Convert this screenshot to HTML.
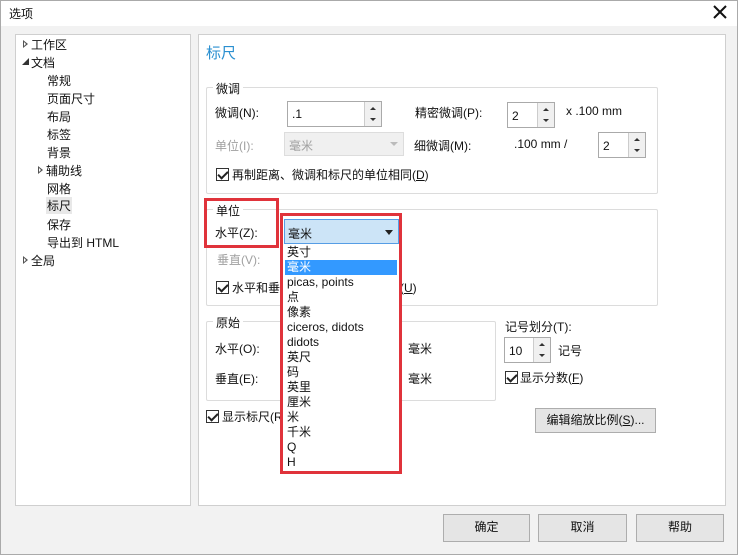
<!DOCTYPE html>
<html><head><meta charset="utf-8"><style>
*{margin:0;padding:0;box-sizing:border-box}
body{width:738px;height:555px;background:#f2f2f2;font-family:"Liberation Sans","Noto Sans CJK SC",sans-serif;font-size:12px;color:#111;position:relative;overflow:hidden}
.a{position:absolute;white-space:nowrap}
.box{position:absolute;border:1px solid #cfcfcf}
.grp{position:absolute;border:1px solid #dcdcdc;border-radius:2px}
.lg{position:absolute;background:#fff;padding:0 3px}
.inp{position:absolute;background:#fff;border:1px solid #aaa}
.sp{position:absolute;background:#f0f0f0;border-left:1px solid #ccc;top:0;right:0;width:17px;height:100%}
.sp:before{content:"";position:absolute;left:5px;top:5px;border:3px solid transparent;border-bottom:3px solid #333;border-top:0}
.sp:after{content:"";position:absolute;left:5px;bottom:5px;border:3px solid transparent;border-top:3px solid #333;border-bottom:0}
.cb{position:absolute;width:13px;height:13px;border:1px solid #333;background:#fff}
.cb:after{content:"";position:absolute;left:3px;top:0px;width:4px;height:8px;border:solid #222;border-width:0 2px 2px 0;transform:rotate(45deg)}
.btn{position:absolute;background:#e5e5e5;border:1px solid #adadad;text-align:center;line-height:25px}
.red{position:absolute;border:3px solid #e0333b}
.gray{color:#a0a0a0}
.li{position:absolute;left:285px;width:112px;height:15px;line-height:15px;padding-left:2px}
.tr{position:absolute;width:0;height:0;border-top:4px solid transparent;border-bottom:4px solid transparent;border-left:5px solid #555}
.tr:after{content:"";position:absolute;left:-4px;top:-2px;border-top:2px solid transparent;border-bottom:2px solid transparent;border-left:2px solid #fff}
</style></head><body>
<div class="a" style="left:0;top:0;width:738px;height:26px;background:#fff"></div>
<div class="a" style="left:9px;top:5px;font-size:12px">选项</div>
<svg class="a" style="left:713px;top:5px" width="14" height="14"><path d="M1 1L13 13M13 1L1 13" stroke="#111" stroke-width="2"/></svg>

<div class="box" style="left:15px;top:34px;width:176px;height:472px;background:#fff"></div>
<div class="tr" style="left:23px;top:40px"></div><div class="a" style="left:31px;top:36px">工作区</div>
<svg class="a" style="left:22px;top:58px" width="7" height="7"><path d="M7 0L7 7L0 7Z" fill="#333"/></svg><div class="a" style="left:31px;top:54px">文档</div>
<div class="a" style="left:47px;top:72px">常规</div>
<div class="a" style="left:47px;top:90px">页面尺寸</div>
<div class="a" style="left:47px;top:108px">布局</div>
<div class="a" style="left:47px;top:126px">标签</div>
<div class="a" style="left:47px;top:144px">背景</div>
<div class="tr" style="left:38px;top:166px"></div><div class="a" style="left:46px;top:162px">辅助线</div>
<div class="a" style="left:47px;top:180px">网格</div>
<div class="a" style="left:46px;top:197px;background:#e8e8e8;padding:0 1px">标尺</div>
<div class="a" style="left:47px;top:216px">保存</div>
<div class="a" style="left:47px;top:234px">导出到 HTML</div>
<div class="tr" style="left:23px;top:256px"></div><div class="a" style="left:31px;top:252px">全局</div>

<div class="box" style="left:198px;top:34px;width:528px;height:472px;background:#fff"></div>
<div class="a" style="left:206px;top:42px;font-size:15px;color:#2a8fd0">标尺</div>

<div class="grp" style="left:206px;top:87px;width:452px;height:107px"></div>
<div class="lg" style="left:213px;top:80px">微调</div>
<div class="a" style="left:215px;top:104px">微调(N):</div>
<div class="inp" style="left:287px;top:101px;width:95px;height:26px"><span class="a" style="left:4px;top:5px">.1</span><div class="sp"></div></div>
<div class="a" style="left:415px;top:104px">精密微调(P):</div>
<div class="inp" style="left:507px;top:102px;width:48px;height:26px"><span class="a" style="left:4px;top:6px">2</span><div class="sp"></div></div>
<div class="a" style="left:566px;top:104px">x .100 mm</div>
<div class="a gray" style="left:215px;top:137px">单位(I):</div>
<div class="a" style="left:284px;top:132px;width:120px;height:24px;background:#f0f0f0;border:1px solid #ddd"><span class="a gray" style="left:4px;top:4px">毫米</span><span class="a" style="right:5px;top:9px;border:4px solid transparent;border-top:4px solid #bbb"></span></div>
<div class="a" style="left:414px;top:137px">细微调(M):</div>
<div class="a" style="left:514px;top:137px">.100 mm /</div>
<div class="inp" style="left:598px;top:132px;width:48px;height:26px"><span class="a" style="left:4px;top:6px">2</span><div class="sp"></div></div>
<div class="cb" style="left:216px;top:168px"></div>
<div class="a" style="left:232px;top:166px">再制距离、微调和标尺的单位相同(<u>D</u>)</div>

<div class="grp" style="left:206px;top:209px;width:452px;height:97px"></div>
<div class="lg" style="left:213px;top:202px">单位</div>
<div class="a" style="left:215px;top:224px">水平(Z):</div>
<div class="a gray" style="left:217px;top:251px">垂直(V):</div>
<div class="cb" style="left:216px;top:281px"></div>
<div class="a" style="left:232px;top:279px">水平和垂直标尺使用相同的单位(<u>U</u>)</div>

<div class="grp" style="left:206px;top:321px;width:290px;height:80px"></div>
<div class="lg" style="left:213px;top:314px">原始</div>
<div class="a" style="left:215px;top:340px">水平(O):</div>
<div class="a" style="left:408px;top:340px">毫米</div>
<div class="a" style="left:215px;top:370px">垂直(E):</div>
<div class="a" style="left:408px;top:370px">毫米</div>
<div class="a" style="left:505px;top:318px">记号划分(T):</div>
<div class="inp" style="left:504px;top:337px;width:47px;height:26px"><span class="a" style="left:4px;top:6px">10</span><div class="sp"></div></div>
<div class="a" style="left:558px;top:342px">记号</div>
<div class="cb" style="left:505px;top:371px"></div>
<div class="a" style="left:520px;top:369px">显示分数(<u>F</u>)</div>
<div class="cb" style="left:206px;top:410px"></div>
<div class="a" style="left:222px;top:408px">显示标尺(R)</div>
<div class="btn" style="left:535px;top:408px;width:121px;height:25px;line-height:23px">编辑缩放比例(<u>S</u>)...</div>

<div class="a" style="left:283px;top:244px;width:116px;height:228px;background:#fff"></div>
<div class="a" style="left:284px;top:219px;width:115px;height:25px;background:#cce4f7;border:1px solid #569de5"><span class="a" style="left:3px;top:5px">毫米</span><span class="a" style="right:5px;top:10px;border:4px solid transparent;border-top:5px solid #222"></span></div>
<div class="li" style="top:245px">英寸</div>
<div class="li" style="top:260px;background:#3399ff;color:#fff">毫米</div>
<div class="li" style="top:275px">picas, points</div>
<div class="li" style="top:290px">点</div>
<div class="li" style="top:305px">像素</div>
<div class="li" style="top:320px">ciceros, didots</div>
<div class="li" style="top:335px">didots</div>
<div class="li" style="top:350px">英尺</div>
<div class="li" style="top:365px">码</div>
<div class="li" style="top:380px">英里</div>
<div class="li" style="top:395px">厘米</div>
<div class="li" style="top:410px">米</div>
<div class="li" style="top:425px">千米</div>
<div class="li" style="top:440px">Q</div>
<div class="li" style="top:455px">H</div>

<div class="red" style="left:204px;top:198px;width:75px;height:50px"></div>
<div class="red" style="left:280px;top:213px;width:122px;height:261px"></div>

<div class="btn" style="left:443px;top:514px;width:87px;height:28px">确定</div>
<div class="btn" style="left:538px;top:514px;width:89px;height:28px">取消</div>
<div class="btn" style="left:636px;top:514px;width:88px;height:28px">帮助</div>
<div class="a" style="left:0;top:0;width:738px;height:555px;border:1px solid #aaa"></div>
</body></html>
